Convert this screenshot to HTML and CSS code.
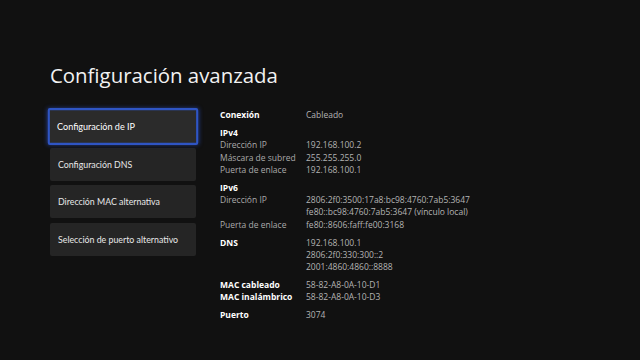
FILE: index.html
```html
<!DOCTYPE html>
<html>
	<head>
		<title>Configuración avanzada</title>
		<link rel="stylesheet" href="styles.css">
	</head>
	<body>
		<div class="page">
			<h1 class="title">Configuración avanzada</h1>

			<div class="content">
				<!-- left menu -->
				<div class="menu">
					<div class="item focused">Configuración de IP</div>
					<div class="item">Configuración DNS</div>
					<div class="item">Dirección MAC alternativa</div>
					<div class="item">Selección de puerto alternativo</div>
				</div>

				<!-- network details -->
				<div class="details">
					<div class="group">
						<div class="row"><span class="head">Conexión</span><span class="val">Cableado</span></div>
					</div>
					<div class="group">
						<div class="row"><span class="head">IPv4</span></div>
						<div class="row"><span class="lbl">Dirección IP</span><span class="val">192.168.100.2</span></div>
						<div class="row"><span class="lbl">Máscara de subred</span><span class="val">255.255.255.0</span></div>
						<div class="row"><span class="lbl">Puerta de enlace</span><span class="val">192.168.100.1</span></div>
					</div>
					<div class="group">
						<div class="row"><span class="head">IPv6</span></div>
						<div class="row"><span class="lbl">Dirección IP</span><span class="val">2806:2f0:3500:17a8:bc98:4760:7ab5:3647<br>fe80::bc98:4760:7ab5:3647 (vínculo local)</span></div>
						<div class="row"><span class="lbl">Puerta de enlace</span><span class="val">fe80::8606:faff:fe00:3168</span></div>
					</div>
					<div class="group">
						<div class="row"><span class="head">DNS</span><span class="val">192.168.100.1<br>2806:2f0:330:300::2<br>2001:4860:4860::8888</span></div>
					</div>
					<div class="group">
						<div class="row"><span class="head">MAC cableado</span><span class="val">58-82-A8-0A-10-D1</span></div>
						<div class="row"><span class="head">MAC inalámbrico</span><span class="val">58-82-A8-0A-10-D3</span></div>
					</div>
					<div class="group">
						<div class="row"><span class="head">Puerto</span><span class="val">3074</span></div>
					</div>
				</div>
			</div>
		</div>
	</body>
</html>
```

FILE: styles.css
```css
body {
	margin: 0;
	background-color: #111111;
	color: #ffffff;
	font-family: "Open Sans", "Noto Sans", sans-serif;
}

.page {
	width: 640px;
	height: 360px;
	padding: 58px 0 0 50px;
	box-sizing: border-box;
}

.title {
	margin: 0;
	font-weight: normal;
	font-size: 20.4px;
	line-height: 34px;
	color: #f2f2f2;
}

.content {
	display: flex;
	gap: 24px;
	margin-top: 17px;
}

/* menu on the left */

.menu {
	display: flex;
	flex-direction: column;
	gap: 4.5px;
	width: 146px;
	padding-top: 1px;
}

.item {
	height: 33px;
	display: flex;
	align-items: center;
	padding-left: 8px;
	background-color: #252525;
	color: #e8e8e8;
	font-family: Lato, "Open Sans", sans-serif;
	font-size: 8.8px;
	border-radius: 2px;
	box-sizing: border-box;
}

.item.focused {
	background-color: #2b2b2b;
	border: 2px solid #2f55c4;
	box-shadow: 0 0 4px rgba(50, 90, 220, 0.55);
	padding-left: 7px;
	transform: scale(1.03, 1.12);
	color: #ffffff;
}

/* details on the right */

.details {
	font-size: 8.5px;
	line-height: 12.25px;
	color: #b4b4b4;
}

.group {
	margin-bottom: 5.75px;
}

.row {
	display: flex;
}

.row span:first-child {
	width: 86px;
	flex-shrink: 0;
}

.head {
	font-weight: bold;
	color: #ffffff;
}

.lbl {
	color: #aaaaaa;
}

.val {
	color: #b4b4b4;
}
```
